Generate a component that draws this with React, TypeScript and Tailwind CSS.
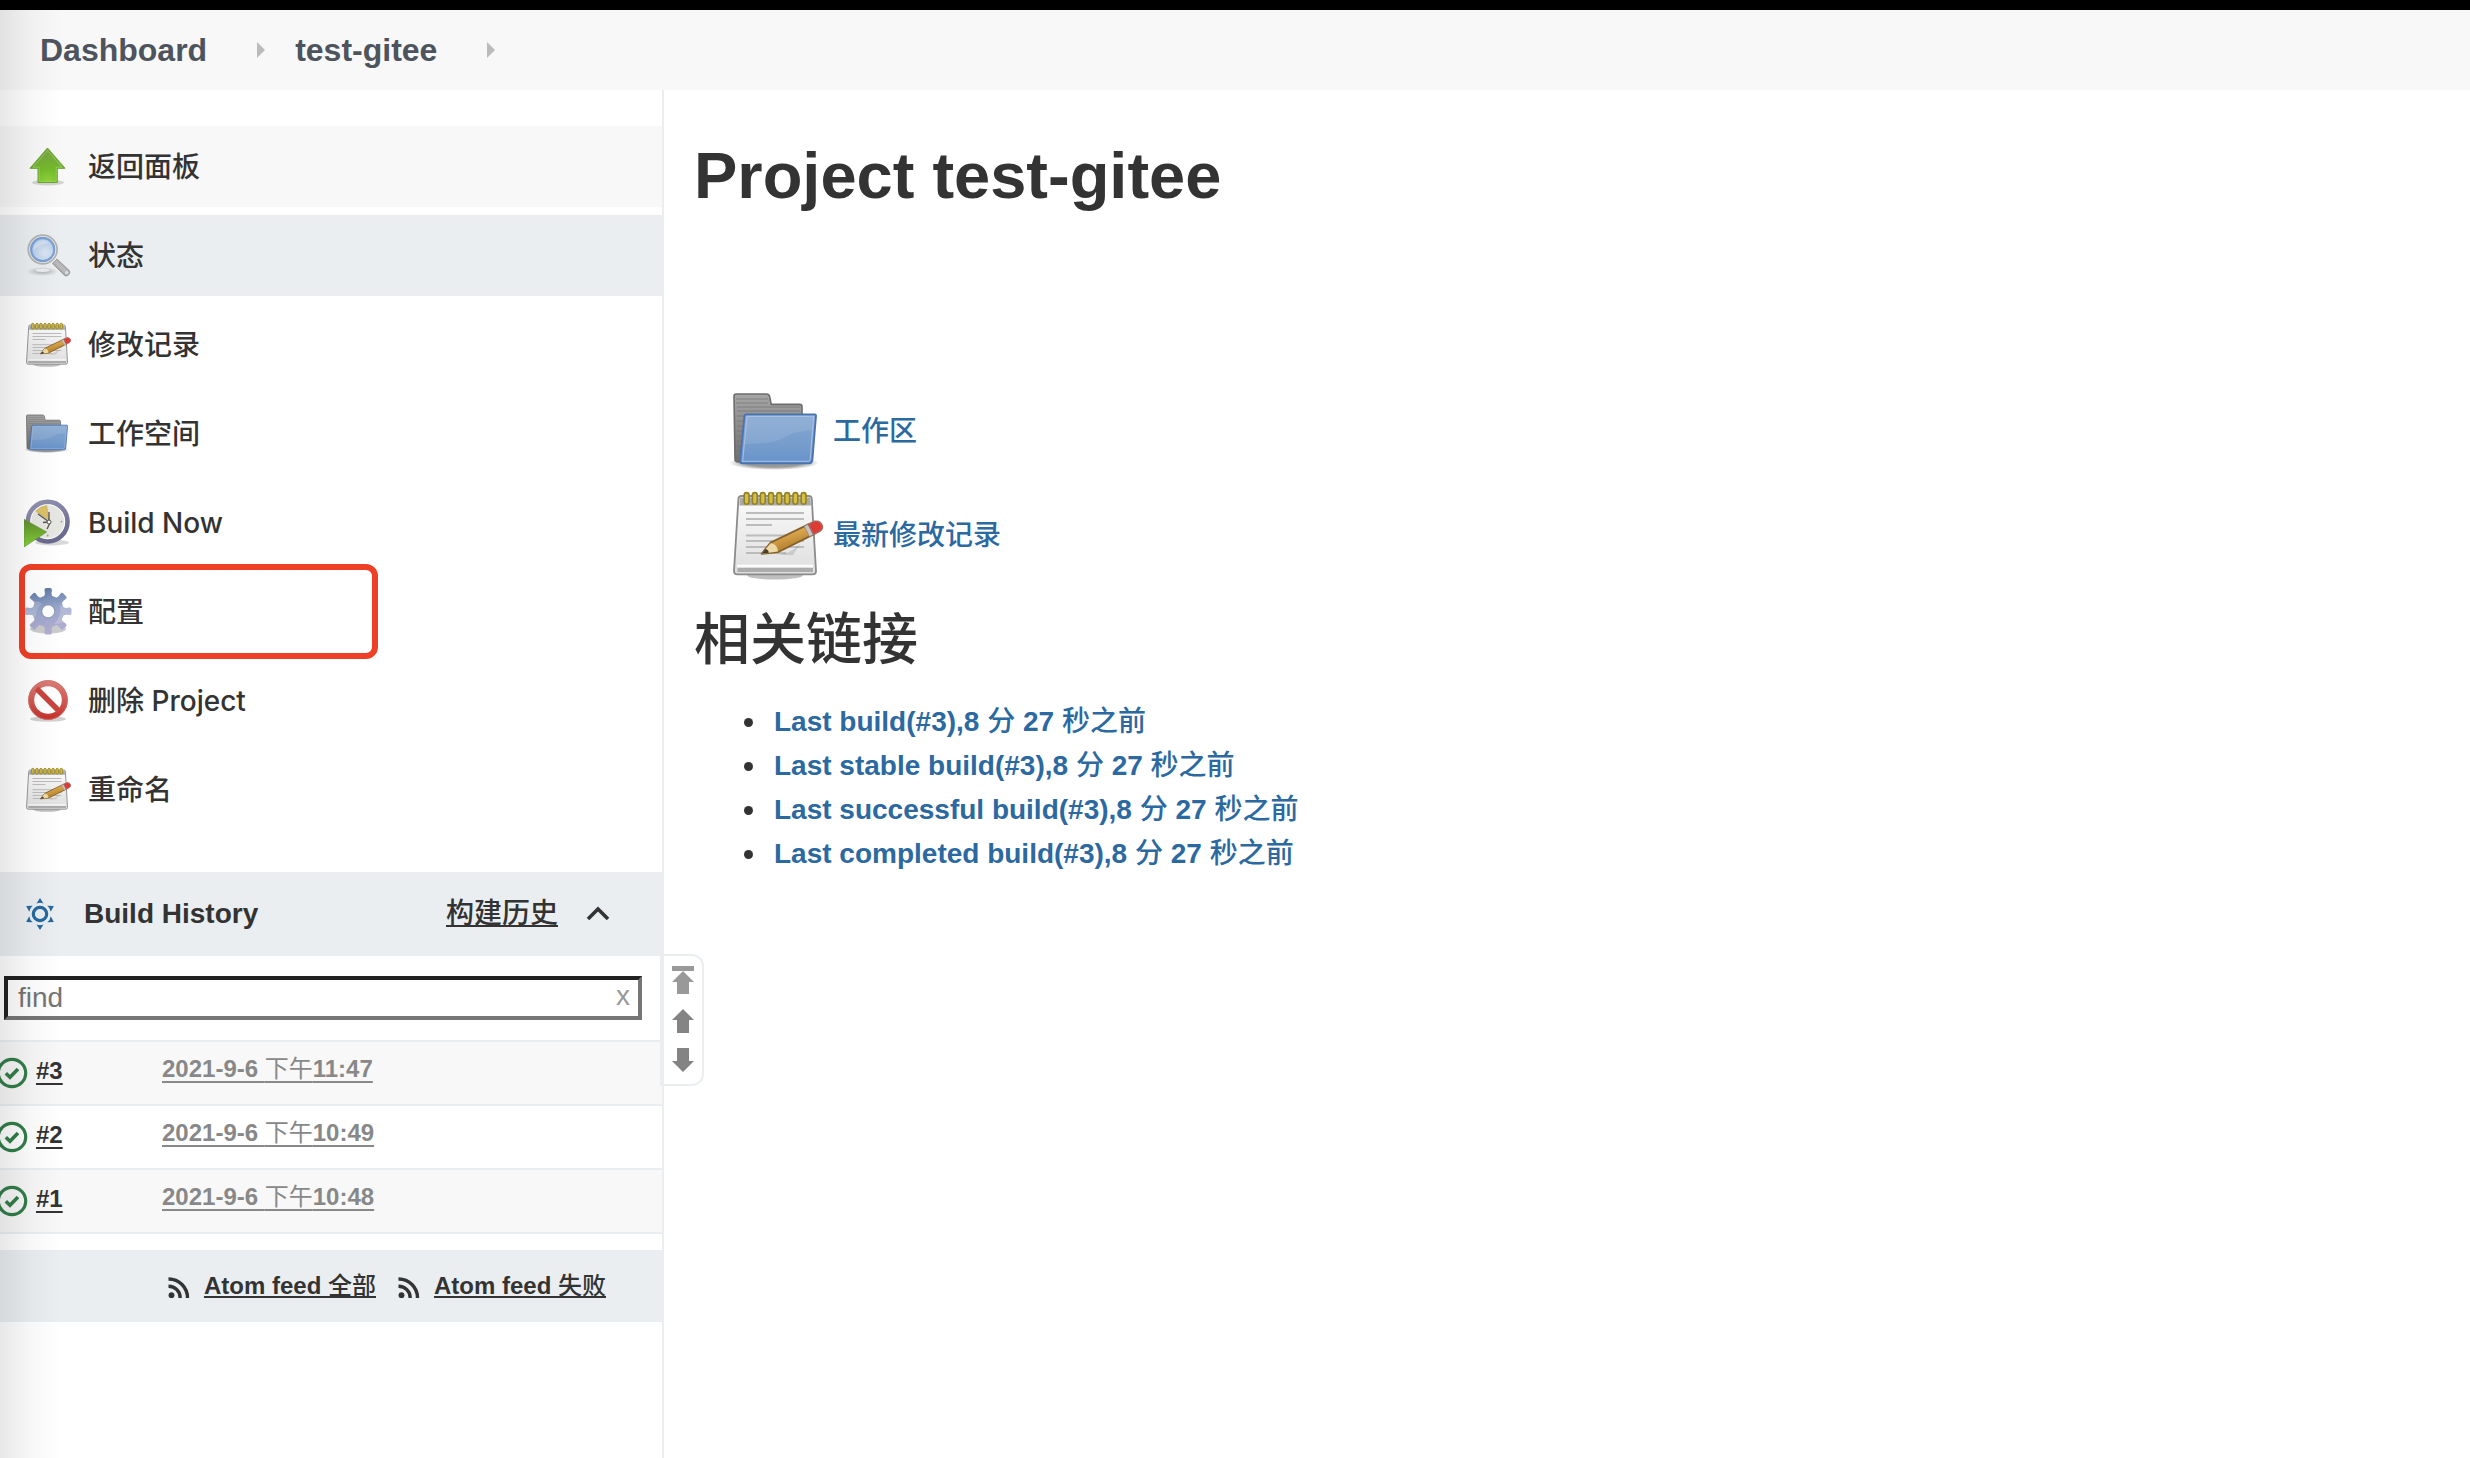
import React from 'react';

type IconProps = { className?: string };

function UpIcon({ className }: IconProps) {
  return (
    <svg viewBox="0 0 48 48" className={className} aria-hidden="true">
      <defs>
        <radialGradient id="up-fill" cx="0.5" cy="1" r="0.9">
          <stop offset="0" stopColor="#8fd63a" />
          <stop offset="0.5" stopColor="#73b82c" />
          <stop offset="1" stopColor="#76a544" />
        </radialGradient>
      </defs>
      <ellipse cx="24" cy="39.5" rx="16" ry="3" fill="#000" opacity="0.15" />
      <path d="M23.5 5 41 25.3h-7.7v14.2H14V25.3H6z" fill="url(#up-fill)" stroke="#6aa336" strokeWidth="1" strokeLinejoin="round" />
      <path d="M23.5 7.5 38 24.2h-5.8v14.2H15.2V24.2H9z" fill="none" stroke="#a8dc6c" strokeWidth="0.8" opacity="0.7" />
    </svg>
  );
}

function SearchIcon({ className }: IconProps) {
  return (
    <svg viewBox="0 0 48 48" className={className} aria-hidden="true">
      <defs>
        <radialGradient id="lens" cx="0.6" cy="0.65" r="0.7">
          <stop offset="0" stopColor="#dfe8f4" />
          <stop offset="1" stopColor="#a9c4e6" />
        </radialGradient>
        <linearGradient id="grip" x1="0" y1="1" x2="1" y2="0">
          <stop offset="0" stopColor="#6c6c6c" />
          <stop offset="0.5" stopColor="#bdbdbd" />
          <stop offset="1" stopColor="#858585" />
        </linearGradient>
        <radialGradient id="lens-shade">
          <stop offset="0.3" stopColor="#000" stopOpacity="0.2" />
          <stop offset="1" stopColor="#000" stopOpacity="0" />
        </radialGradient>
      </defs>
      <ellipse cx="18.5" cy="39.5" rx="16" ry="4.5" fill="url(#lens-shade)" />
      <ellipse cx="18.5" cy="38.4" rx="7" ry="1.6" fill="#fff" opacity="0.7" />
      <path d="M28.5 31.5 33 27 45.300 38.600q1.400 2-.6 4.200-2.200 2-4.200.6z" fill="url(#grip)" stroke="#8f8f8f" strokeWidth="0.8" />
      <circle cx="42.6" cy="40.6" r="1.6" fill="#ddd" />
      <circle cx="18.7" cy="17.5" r="14.4" fill="#f1f1ef" stroke="#b3b3b1" strokeWidth="1.8" />
      <circle cx="18.7" cy="17.5" r="11.6" fill="url(#lens)" stroke="#7ba0d6" strokeWidth="2.2" />
      <path d="M9.5 19a9.5 9.5 0 0 1 16-8.2Q14 12.500 9.500 19z" fill="#fff" opacity="0.3" />
    </svg>
  );
}

const ringOffsets = [8.8, 12.9, 16.9, 21, 25.1, 29.1, 33.2, 37.3];

function NotepadIcon({ className }: IconProps) {
  return (
    <svg viewBox="0 0 48 48" className={className} aria-hidden="true">
      <defs>
        <linearGradient id="page" x1="0" y1="0" x2="0" y2="1">
          <stop offset="0" stopColor="#fbfbfb" />
          <stop offset="1" stopColor="#dedede" />
        </linearGradient>
        <linearGradient id="pencil" x1="0.3" y1="0.2" x2="0.6" y2="0.8">
          <stop offset="0" stopColor="#e8b65c" />
          <stop offset="1" stopColor="#b57f2c" />
        </linearGradient>
      </defs>
      <ellipse cx="23" cy="43.600" rx="14" ry="2.200" fill="#000" opacity="0.25" />
      <path d="M6.200 4h33.600q1.500 0 1.600 1.500L43.500 41.500q0 1.700-1.700 1.700H4.200q-1.700 0-1.700-1.700L4.700 5.500Q4.800 4 6.200 4z" fill="url(#page)" stroke="#8b8b8b" strokeWidth="0.9" />
      <path d="M5.400 4.800h35.300l.3 3.900H5.200z" fill="#a9a9a5" />
      <path d="M4.200 40h37.800v2H4.200z" fill="#acacac" />
      <path d="M4 38.900h38" stroke="#fff" strokeWidth="1" />
      {ringOffsets.map((x) => (
        <rect key={x} x={x - 1.2} y="2.300" width="2.400" height="5.800" rx="1.200" fill="#d6bf45" stroke="#938222" strokeWidth="0.8" />
      ))}
      <path d="M8.500 12.500h29M8.500 15.500h29M8.500 18.500h13M8.500 23.700h29M8.500 26.500h29M8.500 29.500h29M8.500 32.500h20" stroke="#bcbcbc" strokeWidth="1" />
      <path d="M18 33.500q12 1 18-6l-4 6z" fill="#000" opacity="0.12" />
      <path d="M16.300 32.900 20.800 27.300 39.700 18.200 42.300 23.200 24.700 32z" fill="url(#pencil)" stroke="#85622c" strokeWidth="0.9" strokeLinejoin="round" />
      <path d="M16.300 32.900 20.800 27.600Q24.300 28 24.500 31.800z" fill="#ecd9a5" />
      <path d="m16.300 32.900 1.900-2.400q1.700.5 1.700 1.900z" fill="#4a3c2a" />
      <path d="M37.600 19.100 39.700 18.100 42.300 23.200 40.200 24.300z" fill="#c9c3c0" stroke="#8d8581" strokeWidth="0.4" />
      <path d="m39.700 18.100 3-1.400q3.100-.6 4 2.400.2 1.700-1.600 2.700l-2.800 1.400z" fill="#de3b34" stroke="#a7655d" strokeWidth="0.8" />
    </svg>
  );
}

function FolderIcon({ className }: IconProps) {
  return (
    <svg viewBox="0 0 48 48" className={className} aria-hidden="true">
      <defs>
        <linearGradient id="folder-front" x1="0" y1="0" x2="0" y2="1">
          <stop offset="0" stopColor="#87a8d3" />
          <stop offset="0.700" stopColor="#749bcb" />
          <stop offset="1" stopColor="#6692cb" />
        </linearGradient>
        <linearGradient id="folder-back" x1="0" y1="0" x2="0" y2="1">
          <stop offset="0" stopColor="#a6a6a6" />
          <stop offset="1" stopColor="#6f6f6f" />
        </linearGradient>
        <radialGradient id="folder-shade">
          <stop offset="0.600" stopColor="#000" stopOpacity="0.4" />
          <stop offset="1" stopColor="#000" stopOpacity="0" />
        </radialGradient>
      </defs>
      <ellipse cx="22.500" cy="39.500" rx="22.500" ry="3.500" fill="url(#folder-shade)" />
      <path d="M3.600 5h15.200q1.200 0 1.500 1.200l.8 4h14.200q1.200 0 1.200 1.200V39H4.500q-1.500 0-1.500-1.500L2.500 6q0-1 1.100-1z" fill="url(#folder-back)" stroke="#6c6c6c" strokeWidth="0.800" />
      <path d="M3.500 7.500h16M3.500 9.500h16M4 11.500h31.500M4 13.500h31.500M4 16h4M4 18.500h3.500M4 21h3.500M4 23.500h3M4 26h3M4 28.500h2.500M4 31h2.500M4 33.500h2" stroke="#6a6a6a" strokeWidth="0.400" opacity="0.700" />
      <path d="M8.700 15.200h34.100q.8 0 .7.900L41.700 38q-.2 1.700-1.600 1.700H6.600q-1.200 0-1-1.500L7.700 16.200q.1-1 1-1z" fill="url(#folder-front)" stroke="#4a73b0" strokeWidth="0.900" />
      <path d="M9 16.300h33.300L40.600 37.500q-.2 1.200-1 1.200H6.800z" fill="none" stroke="#b7cbe7" strokeWidth="0.600" opacity="0.700" />
      <path d="M9 17h33l-.7 6q-9 .5-14 4-5 3-19.500 3z" fill="#fff" opacity="0.100" />
    </svg>
  );
}

function ClockIcon({ className }: IconProps) {
  return (
    <svg viewBox="0 0 48 48" className={className} aria-hidden="true">
      <defs>
        <linearGradient id="clock-ring" x1="0" y1="0" x2="0.400" y2="1">
          <stop offset="0" stopColor="#9494b2" />
          <stop offset="1" stopColor="#6a6a90" />
        </linearGradient>
        <linearGradient id="play" x1="0" y1="0" x2="0" y2="1">
          <stop offset="0" stopColor="#5d8a2c" />
          <stop offset="1" stopColor="#85d138" />
        </linearGradient>
      </defs>
      <ellipse cx="28" cy="43.500" rx="17" ry="3" fill="#000" opacity="0.150" />
      <circle cx="23.700" cy="22.700" r="19.800" fill="#e6e6e2" stroke="url(#clock-ring)" strokeWidth="4.600" />
      <circle cx="23.700" cy="22.700" r="17" fill="none" stroke="#fff" strokeWidth="0.900" />
      <path d="M11.700 12.300Q16 7.500 22.700 6.500L25 21z" fill="#dcc264" stroke="#c3a546" strokeWidth="0.500" />
      <path d="M14 15 24.500 22.500M25 13v9M24.500 23 19 23.500M26 24l-3 6" stroke="#555" strokeWidth="1.300" fill="none" />
      <circle cx="25" cy="23" r="2" fill="#fff" stroke="#555" strokeWidth="1" />
      <circle cx="37.500" cy="22.700" r="0.900" fill="#999" />
      <circle cx="23.700" cy="36.500" r="0.900" fill="#999" />
      <path d="M0 20.300 22.700 33 0 48z" fill="url(#play)" stroke="#659b3a" strokeWidth="0.700" />
    </svg>
  );
}

const teeth = [0, 45, 90, 135, 180, 225, 270, 315];

function GearIcon({ className }: IconProps) {
  return (
    <svg viewBox="0 0 48 48" className={className} aria-hidden="true">
      <defs>
        <linearGradient id="gear-fill" gradientUnits="userSpaceOnUse" x1="20" y1="0" x2="28" y2="46">
          <stop offset="0" stopColor="#5f7aa6" />
          <stop offset="0.450" stopColor="#98a6ca" />
          <stop offset="1" stopColor="#b4aed3" />
        </linearGradient>
        <mask id="gear-hole">
          <rect width="48" height="48" fill="#fff" />
          <circle cx="24.200" cy="23.300" r="6" fill="#000" />
        </mask>
        <mask id="gear-shape">
          <circle cx="24.200" cy="23.300" r="15.800" fill="#fff" />
          {teeth.map((a) => (
            <path key={a} d="M19.200 9.500Q21.600 7 20.500 2.500 20.200 0 22 0h4.400q1.800 0 1.500 2.500-1.100 4.500 1.300 7z" fill="#fff" transform={`rotate(${a} 24.200 23.300)`} />
          ))}
          <circle cx="24.200" cy="23.300" r="6.200" fill="#000" />
        </mask>
      </defs>
      <ellipse cx="24" cy="41" rx="18" ry="4.500" fill="#000" opacity="0.200" mask="url(#gear-hole)" />
      <g mask="url(#gear-shape)">
        <rect width="48" height="48" fill="url(#gear-fill)" />
        <path d="M0 16Q12 10 18 16q-6 4-6 12L0 34z" fill="#fff" opacity="0.180" />
        <path d="M48 14v16q-8 6-18 6 8-8 6-18z" fill="#fff" opacity="0.200" />
      </g>
      <circle cx="24.200" cy="23.300" r="6.500" fill="none" stroke="#8790b4" strokeWidth="0.800" />
    </svg>
  );
}

function StopIcon({ className }: IconProps) {
  return (
    <svg viewBox="0 0 48 48" className={className} aria-hidden="true">
      <defs>
        <linearGradient id="stop-ring" gradientUnits="userSpaceOnUse" x1="24" y1="3" x2="24" y2="43">
          <stop offset="0" stopColor="#db7e78" />
          <stop offset="0.550" stopColor="#cf5650" />
          <stop offset="1" stopColor="#c42f28" />
        </linearGradient>
      </defs>
      <ellipse cx="24" cy="42" rx="18" ry="2.800" fill="#000" opacity="0.180" />
      <circle cx="24" cy="23" r="16.800" fill="#fff" fillOpacity="0.700" stroke="url(#stop-ring)" strokeWidth="6" />
      <path d="m12.500 11.500 23 23" stroke="#c9453e" strokeWidth="5.500" />
      <circle cx="24" cy="23" r="19.400" fill="none" stroke="#cf706b" strokeWidth="0.800" />
    </svg>
  );
}

function SunIcon({ className }: IconProps) {
  return (
    <svg viewBox="0 0 32 32" className={className} aria-hidden="true">
      <circle cx="16" cy="16" r="6.700" fill="none" stroke="#2669a0" strokeWidth="3.200" />
      {[0, 60, 120, 180, 240, 300].map((a) => (
        <path key={a} d="M16 0 19.500 5.600Q16 4.100 12.500 5.600z" fill="#2669a0" transform={`rotate(${a} 16 16)`} />
      ))}
    </svg>
  );
}

function SuccessIcon({ className }: IconProps) {
  return (
    <svg viewBox="0 0 32 32" className={className} role="img" aria-label="Success">
      <circle cx="16" cy="16" r="13.700" fill="none" stroke="#327e4a" strokeWidth="3.200" />
      <path d="m9.800 16.300 4.200 4 8-8.300" fill="none" stroke="#327e4a" strokeWidth="3.600" />
    </svg>
  );
}

function RssIcon({ className }: IconProps) {
  return (
    <svg viewBox="0 0 22 22" className={className} aria-hidden="true">
      <circle cx="3.500" cy="18.200" r="2.900" fill="#333" />
      <path d="M.5 9.300A11.500 11.500 0 0 1 12.200 21M.5 2A18.800 18.800 0 0 1 19.500 21" fill="none" stroke="#333" strokeWidth="3.400" />
    </svg>
  );
}

function Zh({ children }: { children: string }) {
  return <span className="font-medium">{children}</span>;
}

const menu = [
  { label: '返回面板', Icon: UpIcon, tone: 'bg-[#f8f8f8]' },
  { label: '状态', Icon: SearchIcon, tone: 'bg-[#eaeef1]' },
  { label: '修改记录', Icon: NotepadIcon, tone: '' },
  { label: '工作空间', Icon: FolderIcon, tone: '' },
  { label: 'Build Now', Icon: ClockIcon, tone: '' },
  { label: '配置', Icon: GearIcon, tone: '', marked: true },
  { label: '删除 Project', Icon: StopIcon, tone: '' },
  { label: '重命名', Icon: NotepadIcon, tone: '' },
];

const builds = [
  { id: '#3', day: '2021-9-6', time: '11:47' },
  { id: '#2', day: '2021-9-6', time: '10:49' },
  { id: '#1', day: '2021-9-6', time: '10:48' },
];

const permalinks = ['Last build', 'Last stable build', 'Last successful build', 'Last completed build'];

function CrumbArrow() {
  return (
    <svg viewBox="0 0 8 16" className="ml-[50px] mr-[30px] h-4 w-2" aria-hidden="true">
      <path d="M0 0v16l8-8z" fill="#bbb" />
    </svg>
  );
}

function Sidebar() {
  return (
    <aside className="relative w-[664px] shrink-0 border-r-2 border-[#eaeef1] pt-9">
      <nav aria-label="Project">
        <ul className="flex flex-col gap-2">
          {menu.map(({ label, Icon, tone, marked }) => (
            <li key={label} className="relative">
              <a href="#" className={`flex h-[81px] items-center gap-4 pl-6 font-['Inter','Noto_Sans_CJK_SC',sans-serif] text-[28px] font-medium text-[#333] ${tone}`}>
                <Icon className="h-12 w-12 shrink-0" />
                {label}
              </a>
              {marked && (
                <span className="pointer-events-none absolute -top-[7px] left-[19px] h-[95px] w-[359px] rounded-xl border-[6px] border-[#ee4026]" />
              )}
            </li>
          ))}
        </ul>
      </nav>

      <section className="relative mt-[42px]" aria-label="Build History">
        <div className="flex h-[84px] items-center bg-[#eaeef1] pr-[52px] pl-6">
          <SunIcon className="h-8 w-8" />
          <h2 className="ml-7 text-[28px] font-bold">Build History</h2>
          <a href="#" className="ml-auto text-[28px] font-medium underline decoration-2 underline-offset-2">构建历史</a>
          <button type="button" aria-label="Collapse" className="ml-7">
            <svg viewBox="0 0 24 16" className="h-4 w-6" aria-hidden="true">
              <path d="m2 13 10-10 10 10" fill="none" stroke="#333" strokeWidth="3.600" />
            </svg>
          </button>
        </div>

        <div className="py-5 pr-5 pl-1">
          <div className="relative">
            <input
              type="text"
              placeholder="find"
              aria-label="find"
              className="block h-11 w-full border-4 border-t-[#212121] border-r-[#767676] border-b-[#767676] border-l-[#212121] bg-transparent pr-10 pl-[10px] text-[28px] text-[#333] placeholder:text-[#757575]"
            />
            <button type="button" aria-label="Clear" className="absolute inset-y-0 right-3 flex items-center text-[28px] leading-none text-[#999]">
              <span className="pb-1">x</span>
            </button>
          </div>
        </div>

        <table className="w-full table-fixed border-collapse text-2xl font-bold">
          <tbody>
            {builds.map((b) => (
              <tr key={b.id} className="h-16 border-y-2 border-[#eaeef1] odd:bg-[#f8f8f8]">
                <td className="w-[162px] p-0 pb-1">
                  <div className="-ml-1 flex items-center gap-2">
                    <SuccessIcon className="mt-1 h-8 w-8" />
                    <a href="#" className="underline decoration-2 underline-offset-4">{b.id}</a>
                  </div>
                </td>
                <td className="p-0 pb-2">
                  <a href="#" className="text-[#888] underline decoration-2 underline-offset-4">
                    {b.day} <span className="font-normal">下午</span>{b.time}
                  </a>
                </td>
              </tr>
            ))}
          </tbody>
        </table>

        <div className="mt-4 flex h-[72px] items-center justify-end gap-[22px] bg-[#eaeef1] pr-14 text-2xl font-bold">
          {['全部', '失败'].map((kind) => (
            <a key={kind} href="#" className="flex items-center gap-[14px]">
              <RssIcon className="mt-1 h-[22px] w-[22px]" />
              <span className="underline decoration-2 underline-offset-2">Atom feed <Zh>{kind}</Zh></span>
            </a>
          ))}
        </div>

        <div className="absolute top-[82px] -right-[42px] flex h-[132px] w-11 flex-col items-center justify-between rounded-r-xl border-2 border-l-4 border-[#eaeef1] bg-white pt-[10px] pb-3">
          <button type="button" aria-label="Newest builds">
            <svg viewBox="0 0 22 28" className="h-7 w-[22px]" aria-hidden="true">
              <path d="M0 0h22v5H0zM11 5l11 11h-5v12H5V16H0z" fill="#999" />
            </svg>
          </button>
          <button type="button" aria-label="Newer builds">
            <svg viewBox="0 0 22 24" className="h-6 w-[22px]" aria-hidden="true">
              <path d="m11 0 11 11h-5v13H5V11H0z" fill="#848484" />
            </svg>
          </button>
          <button type="button" aria-label="Older builds">
            <svg viewBox="0 0 22 24" className="h-6 w-[22px]" aria-hidden="true">
              <path d="m11 24 11-11h-5V0H5v13H0z" fill="#848484" />
            </svg>
          </button>
        </div>
      </section>
    </aside>
  );
}

function Main() {
  return (
    <main className="min-w-0 flex-1 pt-12 pl-[26px]">
      <h1 className="ml-1 text-[65px] leading-[76px] font-bold">Project test-gitee</h1>
      <div className="mt-[170px] ml-[39px] flex flex-col items-start gap-2 text-[28px] font-medium text-[#2c69a0]">
        <a href="#" className="flex items-center gap-2">
          <FolderIcon className="h-24 w-24" />
          工作区
        </a>
        <a href="#" className="flex items-center gap-2">
          <NotepadIcon className="h-24 w-24" />
          最新修改记录
        </a>
      </div>
      <h2 className="mt-4 ml-1 text-[56px] leading-[80px] font-medium">相关链接</h2>
      <ul className="mt-5 ml-[54px] text-[28px] leading-[44px]">
        {permalinks.map((name) => (
          <li key={name} className="flex items-center gap-[21px] before:h-[9px] before:w-[9px] before:rounded-full before:bg-[#333]">
            <a href="#" className="font-bold text-[#2c69a0]">
              {name}(#3),8 <Zh>分</Zh> 27 <Zh>秒之前</Zh>
            </a>
          </li>
        ))}
      </ul>
    </main>
  );
}

export default function App() {
  return (
    <div className="relative flex min-h-screen flex-col border-t-[10px] border-black bg-white font-['Liberation_Sans','Noto_Sans_CJK_SC',sans-serif] text-[#333]">
      <header className="flex h-20 items-center bg-[#f8f8f8] pl-10 text-[32px] font-bold text-[#4d545d]">
        <a href="#">Dashboard</a>
        <CrumbArrow />
        <a href="#">test-gitee</a>
        <CrumbArrow />
      </header>
      <div className="flex flex-1">
        <Sidebar />
        <Main />
      </div>
      <div className="pointer-events-none absolute inset-y-0 left-0 w-[62px] bg-linear-to-r from-black/9 via-black/3 to-transparent" />
    </div>
  );
}
